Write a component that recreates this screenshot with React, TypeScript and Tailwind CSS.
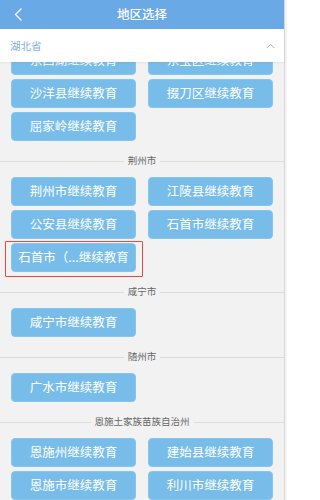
import React from "react";

type Section = { name: string | null; items: string[]; highlight?: number };

const sections: Section[] = [
  { name: null, items: ["东西湖继续教育", "东宝区继续教育", "沙洋县继续教育", "掇刀区继续教育", "屈家岭继续教育"] },
  { name: "荆州市", items: ["荆州市继续教育", "江陵县继续教育", "公安县继续教育", "石首市继续教育", "石首市（...继续教育"], highlight: 4 },
  { name: "咸宁市", items: ["咸宁市继续教育"] },
  { name: "随州市", items: ["广水市继续教育"] },
  { name: "恩施土家族苗族自治州", items: ["恩施州继续教育", "建始县继续教育", "恩施市继续教育", "利川市继续教育"] },
];

function Divider({ name }: { name: string }) {
  return (
    <div className="flex items-center h-[16px] mb-[8px]">
      <div className="flex-1 h-px bg-[#dcdcdc]" />
      <span className="px-[4px] text-[9.5px] leading-none text-[#666]">{name}</span>
      <div className="flex-1 h-px bg-[#dcdcdc]" />
    </div>
  );
}

function Btn({ label, highlight }: { label: string; highlight?: boolean }) {
  return (
    <div className="relative">
      <div className="h-[29px] rounded-[4px] bg-[#78bde9] border border-[#86c6ee] flex items-center justify-center text-white text-[12.5px] leading-none whitespace-nowrap overflow-hidden">
        {label}
      </div>
      {highlight && (
        <div className="absolute left-[-6px] right-[-7px] top-[-2px] bottom-[-5px] border border-[#e8463f] rounded-[1px]" />
      )}
    </div>
  );
}

export default function App() {
  return (
    <div
      className="w-[287px] h-[500px] overflow-hidden flex bg-[#f2f2f2]"
      style={{ fontFamily: '"Noto Sans CJK SC", "Noto Sans", sans-serif' }}
    >
      <div className="w-[284px] flex flex-col">
        <div className="h-[29px] bg-[#69a9e5] flex items-center relative shrink-0">
          <svg className="absolute left-[13px] top-[7px]" width="11" height="15" viewBox="0 0 11 15">
            <path d="M8.5 1.5 L2.5 7.5 L8.5 13.5" fill="none" stroke="#fff" strokeWidth="1.3" />
          </svg>
          <div className="flex-1 text-center text-white text-[12.5px] font-medium">地区选择</div>
        </div>
        <div className="h-[33px] bg-white flex items-center justify-between pl-[10px] pr-[9px] shrink-0 shadow-[0_1px_2px_rgba(0,0,0,0.06)] relative z-10">
          <span className="text-[10.5px] text-[#7fb0e4]">湖北省</span>
          <svg width="9" height="6" viewBox="0 0 9 6">
            <path d="M0.8 5 L4.5 1.3 L8.2 5" fill="none" stroke="#b0b0b0" strokeWidth="1" />
          </svg>
        </div>
        <div className="flex-1 overflow-hidden">
          <div className="mt-[-16px]">
            {sections.map((s, si) => (
              <div key={si} className="pb-[12px]">
                {s.name && <Divider name={s.name} />}
                <div className="grid grid-cols-2 gap-x-[12px] gap-y-[4px] pl-[11px] pr-[11px]">
                  {s.items.map((it, i) => (
                    <Btn key={i} label={it} highlight={s.highlight === i} />
                  ))}
                </div>
              </div>
            ))}
          </div>
        </div>
      </div>
      <div className="w-px bg-[#d6d6d6]" />
      <div className="flex-1 bg-[#f4f4f4]" />
    </div>
  );
}
